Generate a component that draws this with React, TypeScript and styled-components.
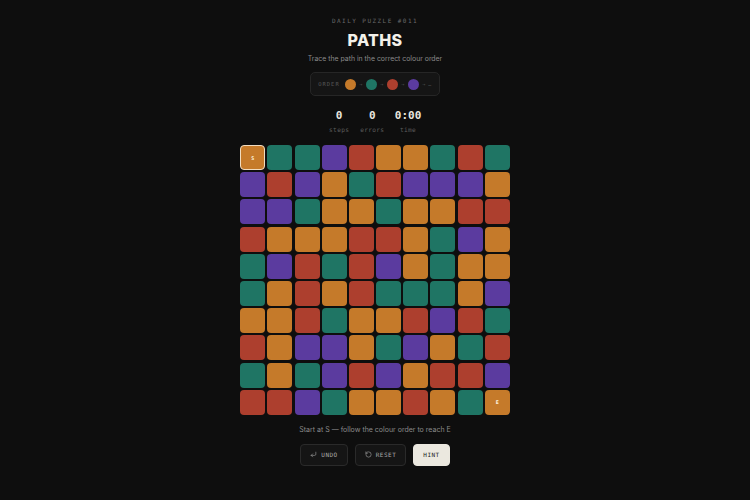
import styled, { createGlobalStyle } from "styled-components";
import { CornerDownLeft, RotateCcw } from "lucide-react";

const GlobalStyle = createGlobalStyle`
  html, body {
    margin: 0;
    padding: 0;
    background: #0e0e0e;
  }
  body {
    font-family: "Inter", "Liberation Sans", sans-serif;
  }
`;

const COLORS: Record<string, string> = {
  O: "#c57a2a",
  T: "#1f7564",
  R: "#ad3f2e",
  P: "#5b3b9f",
};

const ROWS = [
  "OTTPROOTRT",
  "PRPOTRPPPO",
  "PPTOOTOORR",
  "ROOORROTPO",
  "TPRTRPOTOO",
  "TORORTTTOP",
  "OORTOORPRT",
  "ROPPOTPOTR",
  "TOTPRPORRP",
  "RRPTOOROTO",
];

const Page = styled.div`
  width: 750px;
  height: 500px;
  display: flex;
  flex-direction: column;
  align-items: center;
  padding-top: 17px;
  box-sizing: border-box;
  color: #eee;
`;

const Eyebrow = styled.div`
  font-family: "DejaVu Sans Mono", monospace;
  font-size: 6px;
  letter-spacing: 1.45px;
  color: #6a6a6a;
  line-height: 8px;
`;

const Title = styled.h1`
  margin: 6px 0 0;
  font-family: "Inter", "Liberation Sans", sans-serif;
  font-weight: 800;
  font-size: 16px;
  line-height: 18px;
  color: #f3f1ea;
  letter-spacing: 0.3px;
`;

const Subtitle = styled.div`
  margin-top: 5px;
  font-size: 6.9px;
  color: #8a8a8a;
  line-height: 10px;
`;

const OrderBox = styled.div`
  margin-top: 8px;
  height: 24px;
  width: 130px;
  box-sizing: border-box;
  border: 1px solid #262626;
  background: #151515;
  border-radius: 5px;
  display: flex;
  align-items: center;
  justify-content: center;
  gap: 3px;
`;

const OrderLabel = styled.span`
  font-family: "DejaVu Sans Mono", monospace;
  font-size: 5.5px;
  letter-spacing: 1px;
  color: #555;
  margin-right: 2px;
`;

const Dot = styled.span<{ $c: string }>`
  width: 11px;
  height: 11px;
  border-radius: 50%;
  background: ${(p) => p.$c};
`;

const Arrow = styled.span`
  font-family: "DejaVu Sans Mono", monospace;
  font-size: 5px;
  color: #555;
  margin: 0 0.5px;
`;

const Stats = styled.div`
  margin-top: 14px;
  display: flex;
  gap: 10.5px;
`;

const Stat = styled.div`
  display: flex;
  flex-direction: column;
  align-items: center;
  min-width: 21px;
`;

const StatValue = styled.div`
  font-family: "DejaVu Sans Mono", monospace;
  font-weight: bold;
  font-size: 11px;
  line-height: 12px;
  color: #e8e6df;
`;

const StatLabel = styled.div`
  margin-top: 4px;
  font-family: "DejaVu Sans Mono", monospace;
  font-size: 6.2px;
  line-height: 8px;
  letter-spacing: 0.3px;
  color: #5c5c5c;
`;

const Grid = styled.div`
  margin-top: 11px;
  display: grid;
  grid-template-columns: repeat(10, 25px);
  grid-auto-rows: 25px;
  gap: 2.2px;
`;

const Cell = styled.div<{ $c: string; $mark?: boolean }>`
  background: ${(p) => p.$c};
  border-radius: 4px;
  box-sizing: border-box;
  border: ${(p) => (p.$mark ? "1.5px solid #f1dcc0" : "none")};
  display: flex;
  align-items: center;
  justify-content: center;
  font-family: "DejaVu Sans Mono", monospace;
  font-weight: bold;
  font-size: 5px;
  color: #fff3df;
`;

const Hint = styled.div`
  margin-top: 10px;
  font-size: 7px;
  color: #8a8a8a;
  line-height: 10px;
`;

const Buttons = styled.div`
  margin-top: 9px;
  display: flex;
  gap: 7px;
`;

const Button = styled.button<{ $primary?: boolean }>`
  height: 22px;
  padding: 0 9px;
  border-radius: 4px;
  border: 1px solid ${(p) => (p.$primary ? "#ebe8df" : "#2a2a2a")};
  background: ${(p) => (p.$primary ? "#ebe8df" : "#151515")};
  color: ${(p) => (p.$primary ? "#222" : "#aaa")};
  font-family: "DejaVu Sans Mono", monospace;
  font-size: 6px;
  letter-spacing: 0.5px;
  display: flex;
  align-items: center;
  gap: 4px;
`;

export default function App() {
  return (
    <>
      <GlobalStyle />
      <Page>
        <Eyebrow>DAILY PUZZLE #011</Eyebrow>
        <Title>PATHS</Title>
        <Subtitle>Trace the path in the correct colour order</Subtitle>
        <OrderBox>
          <OrderLabel>ORDER</OrderLabel>
          <Dot $c={COLORS.O} />
          <Arrow>→</Arrow>
          <Dot $c={COLORS.T} />
          <Arrow>→</Arrow>
          <Dot $c={COLORS.R} />
          <Arrow>→</Arrow>
          <Dot $c={COLORS.P} />
          <Arrow>→ …</Arrow>
        </OrderBox>
        <Stats>
          <Stat>
            <StatValue>0</StatValue>
            <StatLabel>steps</StatLabel>
          </Stat>
          <Stat>
            <StatValue>0</StatValue>
            <StatLabel>errors</StatLabel>
          </Stat>
          <Stat>
            <StatValue>0:00</StatValue>
            <StatLabel>time</StatLabel>
          </Stat>
        </Stats>
        <Grid>
          {ROWS.map((row, r) =>
            row.split("").map((k, c) => {
              const start = r === 0 && c === 0;
              const end = r === 9 && c === 9;
              return (
                <Cell key={`${r}-${c}`} $c={COLORS[k]} $mark={start}>
                  {start ? "S" : end ? "E" : ""}
                </Cell>
              );
            })
          )}
        </Grid>
        <Hint>Start at S — follow the colour order to reach E</Hint>
        <Buttons>
          <Button>
            <CornerDownLeft size={7} strokeWidth={2} />
            UNDO
          </Button>
          <Button>
            <RotateCcw size={7} strokeWidth={2} />
            RESET
          </Button>
          <Button $primary>HINT</Button>
        </Buttons>
      </Page>
    </>
  );
}
